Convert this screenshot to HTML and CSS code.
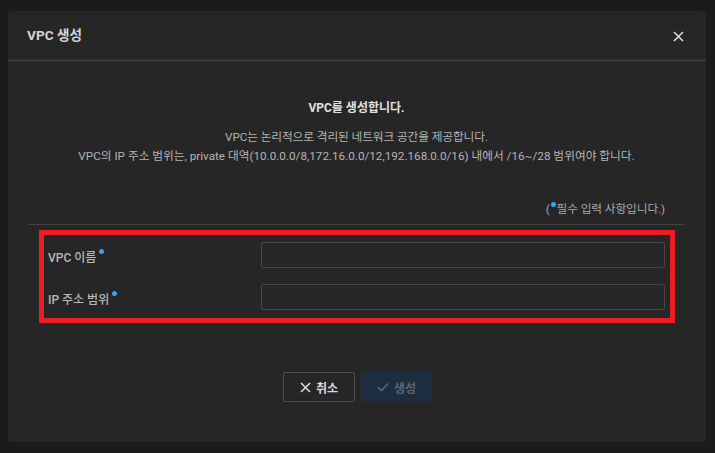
FILE: index.html
```html
<!DOCTYPE html>
<html lang="ko">
<head>
<meta charset="utf-8">
<link rel="stylesheet" href="styles.css">
</head>
<body>
<div class="dialog">
  <div class="header">
    <div class="title">VPC 생성</div>
    <button class="close" aria-label="닫기">
      <svg width="11" height="11" viewBox="0 0 11 11"><path d="M1 1L10 10M10 1L1 10" stroke="#d8d8d8" stroke-width="1.6" fill="none"/></svg>
    </button>
  </div>
  <div class="body">
    <div class="intro">
      <p class="lead">VPC를 생성합니다.</p>
      <p class="desc">VPC는 논리적으로 격리된 네트워크 공간을 제공합니다.</p>
      <p class="desc wide">VPC의 IP 주소 범위는, private 대역(10.0.0.0/8,172.16.0.0/12,192.168.0.0/16) 내에서 /16~/28 범위여야 합니다.</p>
    </div>
    <div class="note">(<span class="dot"></span>필수 입력 사항입니다.)</div>
    <div class="form">
      <div class="row">
        <label class="label">VPC 이름<span class="req"></span></label>
        <input class="input" type="text">
      </div>
      <div class="row">
        <label class="label">IP 주소 범위<span class="req"></span></label>
        <input class="input" type="text">
      </div>
    </div>
    <div class="actions">
      <button class="btn cancel">
        <svg width="11" height="11" viewBox="0 0 11 11"><path d="M1 1L10 10M10 1L1 10" stroke="#d8d8d8" stroke-width="1.6" fill="none"/></svg>
        취소
      </button>
      <button class="btn create" disabled>
        <svg width="12" height="10" viewBox="0 0 12 10"><path d="M1 5L4.5 8.5L11 1.5" stroke="#5e6670" stroke-width="1.6" fill="none"/></svg>
        생성
      </button>
    </div>
  </div>
</div>
</body>
</html>
```
FILE: styles.css
```css
* { box-sizing: border-box; }
html, body { margin: 0; }
body {
  background: #1b1b1b;
  padding: 11px 9px 11px 8px;
  font-family: Roboto, "Noto Sans CJK KR", sans-serif;
  height: 453px;
}
.dialog {
  width: 698px;
  height: 431px;
  background: #262626;
  border-radius: 4px;
}
.header {
  height: 50px;
  border-bottom: 1px solid #444;
  display: flex;
  align-items: center;
  justify-content: space-between;
  padding: 0 22px 0 19px;
}
.title {
  font-size: 13.6px;
  font-weight: 700;
  color: #d4d4d4;
  margin-top: -4px;
}
.close {
  background: none;
  border: 0;
  padding: 0;
  display: flex;
  margin-top: 2px;
}
.body {
  padding: 0 21px 0 20px;
}
.intro {
  padding-top: 38px;
  text-align: center;
}
.intro p {
  margin: 0;
  font-size: 12px;
  line-height: 19px;
}
.lead {
  font-weight: 700;
  color: #e0e0e0;
  margin-bottom: 10px !important;
}
.intro p.desc {
  color: #b4b4b4;
  font-size: 11.7px;
  letter-spacing: -0.1px;
}
.intro p.wide {
  letter-spacing: 0;
}
.note {
  margin-top: 34px;
  text-align: right;
  padding-right: 20px;
  padding-bottom: 5px;
  border-bottom: 1px solid #444;
  font-size: 11.7px;
  letter-spacing: -0.1px;
  line-height: 19px;
  color: #a8a8a8;
}
.dot {
  display: inline-block;
  width: 5px;
  height: 5px;
  border-radius: 50%;
  background: #3aa0f0;
  vertical-align: 6px;
  margin: 0 1px 0 1px;
}
.form {
  margin: 5px 10px 0 11px;
  border: 5px solid #ec1c24;
  padding: 7px 5px 8px 4px;
  display: flex;
  flex-direction: column;
  gap: 16px;
}
.row {
  display: flex;
  align-items: center;
  height: 26px;
}
.label {
  width: 213px;
  font-size: 12px;
  font-weight: 500;
  color: #b8b8b8;
  margin-top: 2px;
}
.req {
  display: inline-block;
  width: 5px;
  height: 5px;
  border-radius: 50%;
  background: #3aa0f0;
  vertical-align: 8px;
  margin-left: 3px;
}
.input {
  flex: 1;
  height: 26px;
  background: #262626;
  border: 1px solid #474747;
  border-radius: 2px;
  outline: none;
}
.actions {
  margin-top: 49px;
  display: flex;
  justify-content: center;
  gap: 6px;
  padding-left: 2px;
}
.btn {
  height: 30px;
  width: 72px;
  border-radius: 2px;
  display: flex;
  align-items: center;
  justify-content: center;
  gap: 5px;
  font-family: Roboto, "Noto Sans CJK KR", sans-serif;
  font-size: 12px;
  font-weight: 700;
}
.cancel {
  background: transparent;
  border: 1px solid #4e4e4e;
  color: #dcdcdc;
}
.create {
  width: 71px;
  background: #1b2d3e;
  border: 0;
  color: #5e6670;
}
```
